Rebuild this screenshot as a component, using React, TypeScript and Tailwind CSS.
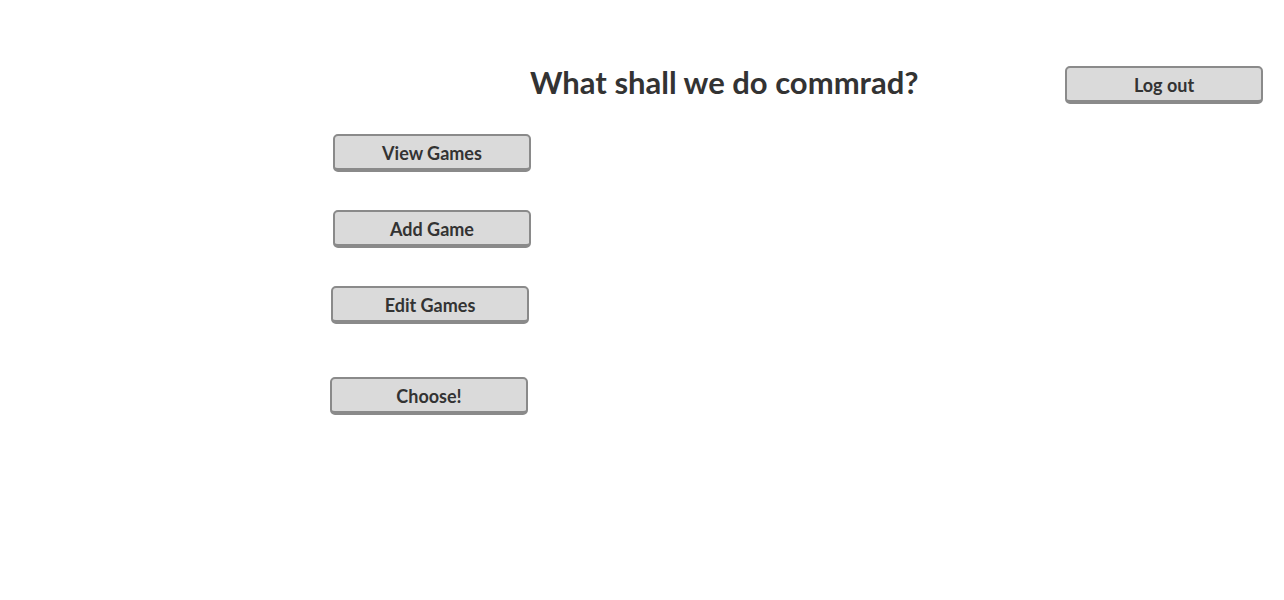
import React from "react";

const btn =
  "w-[198px] h-[38px] rounded-[5px] border-2 border-b-[4px] border-[#8a8a8a] bg-[#dadada] text-[#333333] text-[18px] font-bold flex items-center justify-center leading-none pt-[1px]";

export default function App() {
  return (
    <div className="w-[1284px] h-[600px] bg-white text-[#333333]" style={{ fontFamily: "Lato, 'Open Sans', sans-serif" }}>
      <div className="flex items-start pt-[66px]">
        <h1 className="ml-[530px] w-[389px] text-[31px] font-bold leading-[32px] whitespace-nowrap">
          What shall we do commrad?
        </h1>
        <button className={btn + " ml-[146px]"}>Log out</button>
      </div>
      <div className="flex flex-col mt-[30px]">
        <button className={btn + " ml-[333px]"}>View Games</button>
        <button className={btn + " ml-[333px] mt-[38px]"}>Add Game</button>
        <button className={btn + " ml-[331px] mt-[38px]"}>Edit Games</button>
        <button className={btn + " ml-[330px] mt-[53px]"}>Choose!</button>
      </div>
    </div>
  );
}
